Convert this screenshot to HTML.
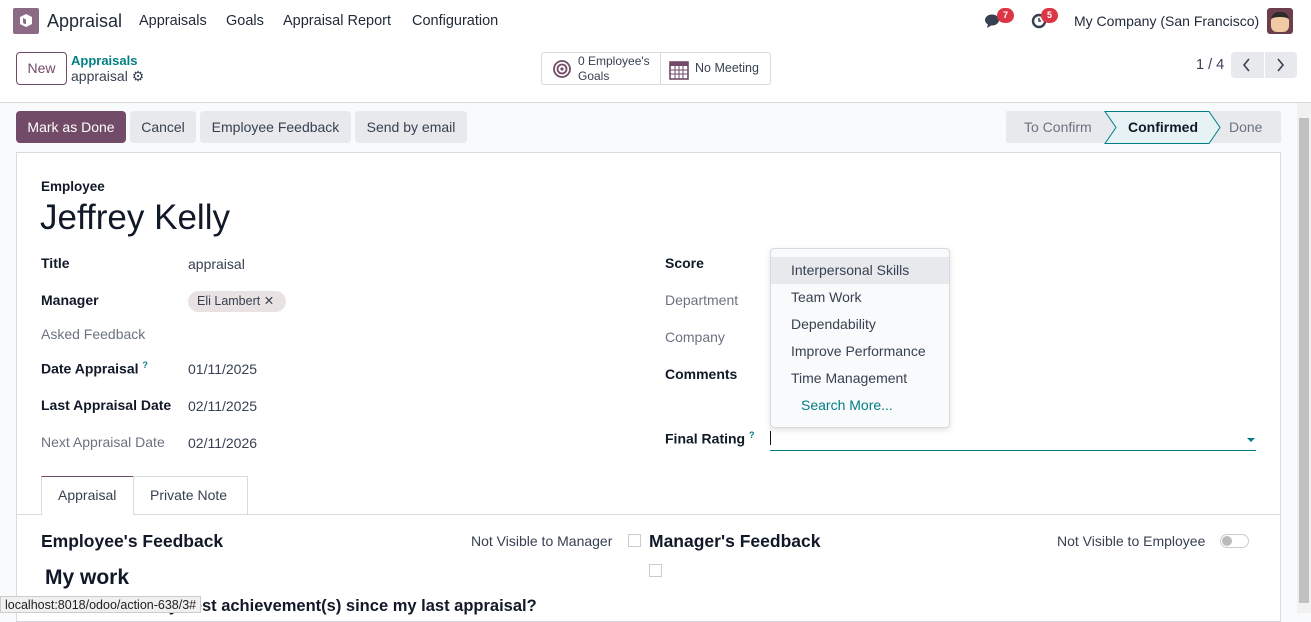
<!DOCTYPE html>
<html><head><meta charset="utf-8"><style>
*{box-sizing:border-box;margin:0;padding:0}
body{width:1311px;height:613px;overflow:hidden;font-family:"Liberation Sans",sans-serif;font-size:14px;color:#374151;background:#f9fafb;position:relative}
.a{position:absolute;white-space:nowrap}
.top{position:absolute;left:0;top:0;width:1311px;height:42px;background:#fff}
.cp{position:absolute;left:0;top:42px;width:1311px;height:61px;background:#fff;border-bottom:1px solid #d8dadd}
.btn{position:absolute;height:32px;border-radius:4px;background:#e7e9ed;color:#374151;font-size:14px;line-height:32px;text-align:center}
.card{position:absolute;left:16px;top:152px;width:1265px;height:470px;background:#fff;border:1px solid #d8dadd}
.lb{font-weight:bold;color:#111827;font-size:14px}
.lg{color:#6b7280;font-size:14px}
.v{color:#374151;font-size:14px}
</style></head><body>
<div class="top"></div>
<div class="a" style="left:13px;top:8px;width:26px;height:26px;background:#8c6a86;border-radius:2px"></div>
<svg class="a" style="left:15px;top:10px" width="22" height="22" viewBox="0 0 22 22"><path d="M11 4l6 3v7l-6 3-6-3V7z" fill="#fff"/><path d="M8 8l3 1.5v5L8 13z" fill="#8c6a86"/></svg>
<div class="a" style="left:47px;top:11px;font-size:18px;color:#1f2937">Appraisal</div>
<div class="a" style="left:139px;top:13px;font-size:14.5px;color:#1f2937">Appraisals</div>
<div class="a" style="left:226px;top:13px;font-size:14.5px;color:#1f2937">Goals</div>
<div class="a" style="left:283px;top:13px;font-size:14.5px;color:#1f2937">Appraisal Report</div>
<div class="a" style="left:412px;top:13px;font-size:14.5px;color:#1f2937">Configuration</div>
<svg class="a" style="left:984px;top:13px" width="18" height="16"><ellipse cx="8" cy="7" rx="7" ry="5.5" fill="#374151"/><path d="M4 11l-1 4 5-3z" fill="#374151"/></svg>
<div class="a" style="left:997px;top:8px;width:17px;height:15px;border-radius:8px;background:#dc3545;color:#fff;font-size:9px;font-weight:bold;text-align:center;line-height:15px">7</div>
<svg class="a" style="left:1031px;top:13px" width="16" height="16"><circle cx="8" cy="8" r="6" fill="none" stroke="#374151" stroke-width="2.4"/><path d="M8 5v3h2" stroke="#374151" stroke-width="1.5" fill="none"/></svg>
<div class="a" style="left:1041px;top:8px;width:17px;height:15px;border-radius:8px;background:#dc3545;color:#fff;font-size:9px;font-weight:bold;text-align:center;line-height:15px">5</div>
<div class="a" style="left:1074px;top:13px;font-size:14px;color:#1f2937">My Company (San Francisco)</div>
<div class="a" style="left:1267px;top:8px;width:26px;height:26px;border-radius:3px;background:#6b3f4c"></div>
<div class="a" style="left:1271px;top:12px;width:18px;height:20px;border-radius:8px 8px 6px 6px;background:#f1c9a5;border-top:5px solid #2a2a2a"></div>

<div class="cp"></div>
<div class="a" style="left:16px;top:52px;width:51px;height:33px;border:1px solid #714b67;border-radius:4px;color:#714b67;text-align:center;line-height:31px;font-size:14px">New</div>
<div class="a" style="left:71px;top:53px;font-size:13px;font-weight:bold;color:#017e84">Appraisals</div>
<div class="a" style="left:71px;top:68px;font-size:14px;color:#374151">appraisal ⚙</div>
<div class="a" style="left:541px;top:52px;width:230px;height:33px;border:1px solid #d8dadd;border-radius:3px;background:#fff"></div>
<div class="a" style="left:660px;top:52px;width:1px;height:33px;background:#d8dadd"></div>
<svg class="a" style="left:552px;top:59px" width="20" height="20"><circle cx="10" cy="10" r="8" fill="none" stroke="#714b67" stroke-width="1.8"/><circle cx="10" cy="10" r="4.5" fill="none" stroke="#714b67" stroke-width="1.8"/><circle cx="10" cy="10" r="1.6" fill="#714b67"/></svg>
<div class="a" style="left:578px;top:54px;font-size:12px;line-height:15px;color:#374151">0 Employee's<br>Goals</div>
<svg class="a" style="left:668px;top:58px" width="22" height="22"><rect x="2" y="4" width="18" height="17" fill="none" stroke="#714b67" stroke-width="1.6"/><rect x="2" y="4" width="18" height="4" fill="#714b67"/><path d="M2 12h18M2 16h18M7 8v13M11 8v13M15 8v13" stroke="#714b67" stroke-width="1"/></svg>
<div class="a" style="left:695px;top:61px;font-size:12.5px;color:#374151">No Meeting</div>
<div class="a" style="left:1196px;top:57px;font-size:14.5px;color:#374151">1 / 4</div>
<div class="btn" style="left:1231px;top:52px;width:66px;height:26px"></div>
<div class="a" style="left:1264px;top:52px;width:1px;height:26px;background:#fff"></div>
<svg class="a" style="left:1241px;top:56px" width="12" height="18"><path d="M8 3L3 9l5 6" stroke="#374151" stroke-width="1.6" fill="none"/></svg>
<svg class="a" style="left:1274px;top:56px" width="12" height="18"><path d="M4 3l5 6-5 6" stroke="#374151" stroke-width="1.6" fill="none"/></svg>

<div class="btn" style="left:16px;top:111px;width:110px;background:#714b67;color:#fff">Mark as Done</div>
<div class="btn" style="left:130px;top:111px;width:66px">Cancel</div>
<div class="btn" style="left:200px;top:111px;width:151px">Employee Feedback</div>
<div class="btn" style="left:355px;top:111px;width:112px">Send by email</div>
<svg class="a" style="left:1006px;top:111px" width="276" height="33"><rect x="0" y="0" width="275" height="32" rx="2" fill="#e7e9ed"/><path d="M99 0.5h104l11 16-11 16H99l11-16z" fill="#e6f2f3" stroke="#017e84"/></svg>
<div class="a" style="left:1024px;top:119px;font-size:14px;color:#6b7280">To Confirm</div>
<div class="a" style="left:1128px;top:119px;font-size:14px;color:#111827;font-weight:bold">Confirmed</div>
<div class="a" style="left:1229px;top:119px;font-size:14px;color:#6b7280">Done</div>
<div class="a" style="left:1297px;top:103px;width:14px;height:510px;background:#f1f1f1"></div>
<div class="a" style="left:1299px;top:118px;width:10px;height:485px;background:#c1c1c1"></div>

<div class="card"></div>
<div class="a lb" style="left:41px;top:179px;font-size:13.5px">Employee</div>
<div class="a" style="left:40px;top:198px;font-size:35px;color:#111827">Jeffrey Kelly</div>
<div class="a lb" style="left:41px;top:255px">Title</div><div class="a v" style="left:188px;top:256px">appraisal</div>
<div class="a lb" style="left:41px;top:292px">Manager</div>
<div class="a" style="left:188px;top:291px;width:98px;height:21px;border-radius:11px;background:#e9e2e2;font-size:12.5px;line-height:21px;padding-left:9px;color:#374151">Eli Lambert ✕</div>
<div class="a lg" style="left:41px;top:326px">Asked Feedback</div>
<div class="a lb" style="left:41px;top:360px">Date Appraisal <sup style="color:#017e84;font-size:9px">?</sup></div><div class="a v" style="left:188px;top:361px">01/11/2025</div>
<div class="a lb" style="left:41px;top:397px">Last Appraisal Date</div><div class="a v" style="left:188px;top:398px">02/11/2025</div>
<div class="a lg" style="left:41px;top:434px">Next Appraisal Date</div><div class="a v" style="left:188px;top:435px">02/11/2026</div>
<div class="a lb" style="left:665px;top:255px">Score</div>
<div class="a lg" style="left:665px;top:292px">Department</div>
<div class="a lg" style="left:665px;top:329px">Company</div>
<div class="a lb" style="left:665px;top:366px">Comments</div>
<div class="a lb" style="left:665px;top:430px">Final Rating <sup style="color:#017e84;font-size:9px">?</sup></div>
<div class="a" style="left:770px;top:450px;width:486px;height:1px;background:#017e84"></div>
<div class="a" style="left:770px;top:431px;width:1px;height:14px;background:#111"></div>
<div class="a" style="left:1247px;top:438px;border:4px solid transparent;border-top:4px solid #017e84"></div>
<div class="a" style="left:770px;top:248px;width:180px;height:180px;background:#f9fafb;border:1px solid #d8dadd;border-radius:4px;box-shadow:0 2px 6px rgba(0,0,0,.12)"></div>
<div class="a" style="left:771px;top:257px;width:178px;height:27px;background:#e7e9ed"></div>
<div class="a v" style="left:791px;top:262px">Interpersonal Skills</div>
<div class="a v" style="left:791px;top:289px">Team Work</div>
<div class="a v" style="left:791px;top:316px">Dependability</div>
<div class="a v" style="left:791px;top:343px">Improve Performance</div>
<div class="a v" style="left:791px;top:370px">Time Management</div>
<div class="a" style="left:801px;top:397px;color:#017e84">Search More...</div>

<div class="a" style="left:17px;top:514px;width:1263px;height:1px;background:#d8dadd"></div>
<div class="a" style="left:41px;top:476px;width:93px;height:39px;background:#fff;border:1px solid #d8dadd;border-top:1px solid #714b67;border-bottom:none"></div>
<div class="a v" style="left:58px;top:487px">Appraisal</div>
<div class="a" style="left:133px;top:476px;width:115px;height:38px;border:1px solid #d8dadd;border-bottom:none"></div>
<div class="a v" style="left:150px;top:487px">Private Note</div>
<div class="a" style="left:41px;top:531px;font-size:17.5px;font-weight:bold;color:#111827">Employee's Feedback</div>
<div class="a v" style="left:471px;top:533px">Not Visible to Manager</div>
<div class="a" style="left:628px;top:534px;width:13px;height:13px;border:1px solid #ccc"></div>
<div class="a" style="left:649px;top:531px;font-size:17.5px;font-weight:bold;color:#111827">Manager's Feedback</div>
<div class="a v" style="left:1057px;top:533px">Not Visible to Employee</div>
<div class="a" style="left:1220px;top:534px;width:29px;height:14px;border:1px solid #ccc;border-radius:7px"></div>
<div class="a" style="left:1222px;top:536px;width:10px;height:10px;border-radius:5px;background:#bbb"></div>
<div class="a" style="left:649px;top:564px;width:13px;height:13px;border:1px solid #ccc"></div>
<div class="a" style="left:45px;top:566px;font-size:21px;font-weight:bold;color:#111827">My work</div>
<div class="a" style="left:80px;top:597px;font-size:16.5px;font-weight:bold;color:#111827">What are my best achievement(s) since my last appraisal?</div>
<div class="a" style="left:0;top:596px;height:17px;padding:0 4px;background:#f0f0f0;border:1px solid #ccc;font-size:12.5px;color:#222;line-height:16px">localhost:8018/odoo/action-638/3#</div>
</body></html>
